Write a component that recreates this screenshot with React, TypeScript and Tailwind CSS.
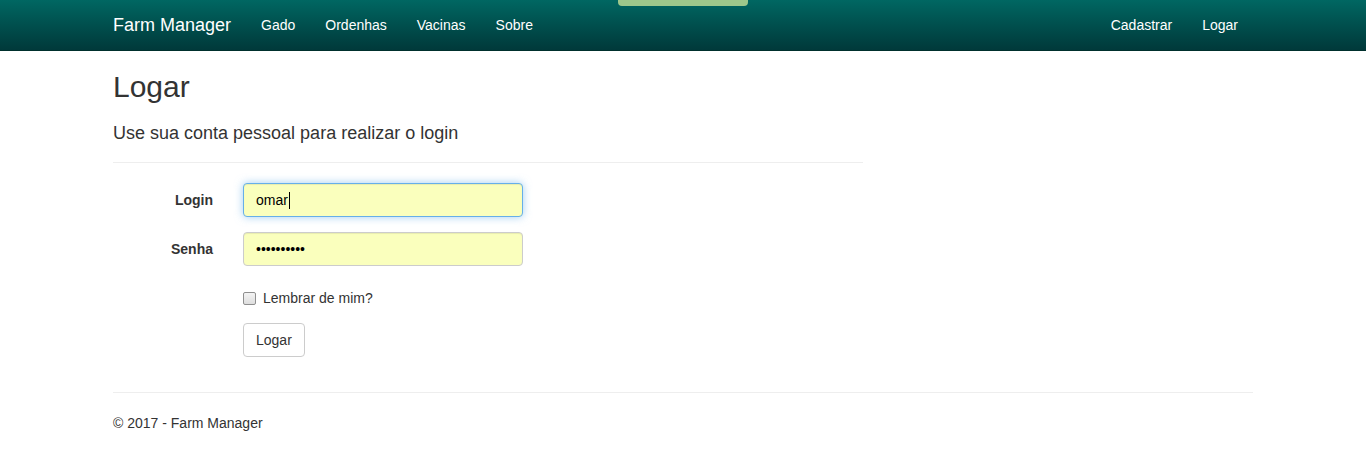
import React from "react";

export default function App() {
  const font = { fontFamily: '"Liberation Sans", Arial, sans-serif' };
  return (
    <div className="min-h-[450px] bg-white text-[14px] leading-[20px] text-[#333]" style={font}>
      {/* Navbar */}
      <div className="relative h-[51px] border-b border-[#00302d] bg-gradient-to-b from-[#006762] to-[#00393a]">
        <div className="absolute left-1/2 top-0 h-[6px] w-[130px] -translate-x-1/2 rounded-b-[4px] bg-[#9dc78b]" />
        <div className="mx-auto flex h-[50px] w-[1170px] items-start justify-between px-[15px]">
          <div className="-ml-[15px] flex items-start">
            <a className="px-[15px] py-[15px] text-[18px] leading-[20px] text-white">Farm Manager</a>
            <div className="flex">
              {["Gado", "Ordenhas", "Vacinas", "Sobre"].map((l) => (
                <a key={l} className="px-[15px] py-[15px] text-[14px] leading-[20px] text-white">
                  {l}
                </a>
              ))}
            </div>
          </div>
          <div className="flex">
            {["Cadastrar", "Logar"].map((l) => (
              <a key={l} className="px-[15px] py-[15px] text-[14px] leading-[20px] text-white">
                {l}
              </a>
            ))}
          </div>
        </div>
      </div>

      {/* Body */}
      <div className="mx-auto w-[1170px] px-[15px]">
        <h2 className="mt-[19px] mb-[10px] text-[30px] leading-[33px] font-normal">Logar</h2>
        <div className="-mx-[15px] flow-root">
          <div className="w-[780px] px-[15px]">
            <h4 className="mt-[10px] mb-[10px] text-[18px] leading-[20px] font-normal">
              Use sua conta pessoal para realizar o login
            </h4>
            <div className="mt-[19px] mb-[20px] border-t border-[#eeeeee]" />

            {/* Login */}
            <div className="-mx-[15px] mb-[15px] flex">
              <label className="w-[130px] px-[15px] pt-[7px] text-right font-bold">Login</label>
              <div className="w-[650px] px-[15px]">
                <div className="flex h-[34px] w-[280px] items-center rounded-[4px] border border-[#66afe9] bg-[#faffbd] px-[12px] text-[14px] text-[#555] shadow-[inset_0_1px_1px_rgba(0,0,0,0.075),0_0_8px_rgba(102,175,233,0.6)]">
                  <span className="text-black">omar</span>
                  <span className="ml-px inline-block h-[17px] w-px bg-black" />
                </div>
              </div>
            </div>

            {/* Senha */}
            <div className="-mx-[15px] mb-[15px] flex">
              <label className="w-[130px] px-[15px] pt-[7px] text-right font-bold">Senha</label>
              <div className="w-[650px] px-[15px]">
                <div className="flex h-[34px] w-[280px] items-center rounded-[4px] border border-[#cccccc] bg-[#faffbd] px-[12px] text-[14px] text-black shadow-[inset_0_1px_1px_rgba(0,0,0,0.075)]">
                  ••••••••••
                </div>
              </div>
            </div>

            {/* Checkbox */}
            <div className="-mx-[15px] mb-[15px] flex">
              <div className="ml-[130px] w-[650px] px-[15px]">
                <div className="min-h-[27px] pt-[7px]">
                  <label className="flex items-start">
                    <span className="mt-[4px] mr-[7px] inline-block h-[13px] w-[13px] rounded-[2px] border border-[#8f8f8f] bg-gradient-to-b from-[#f4f4f4] to-[#dedede]" />
                    <span className="font-normal">Lembrar de mim?</span>
                  </label>
                </div>
              </div>
            </div>

            {/* Button */}
            <div className="-mx-[15px] mb-[15px] flex">
              <div className="ml-[130px] w-[650px] px-[15px]">
                <button className="h-[34px] rounded-[4px] border border-[#cccccc] bg-white px-[12px] text-[14px] leading-[20px] text-[#333]">
                  Logar
                </button>
              </div>
            </div>
          </div>
        </div>

        <div className="mt-[20px] mb-[20px] border-t border-[#eeeeee]" />
        <footer>
          <p className="mb-[10px]">© 2017 - Farm Manager</p>
        </footer>
      </div>
    </div>
  );
}
